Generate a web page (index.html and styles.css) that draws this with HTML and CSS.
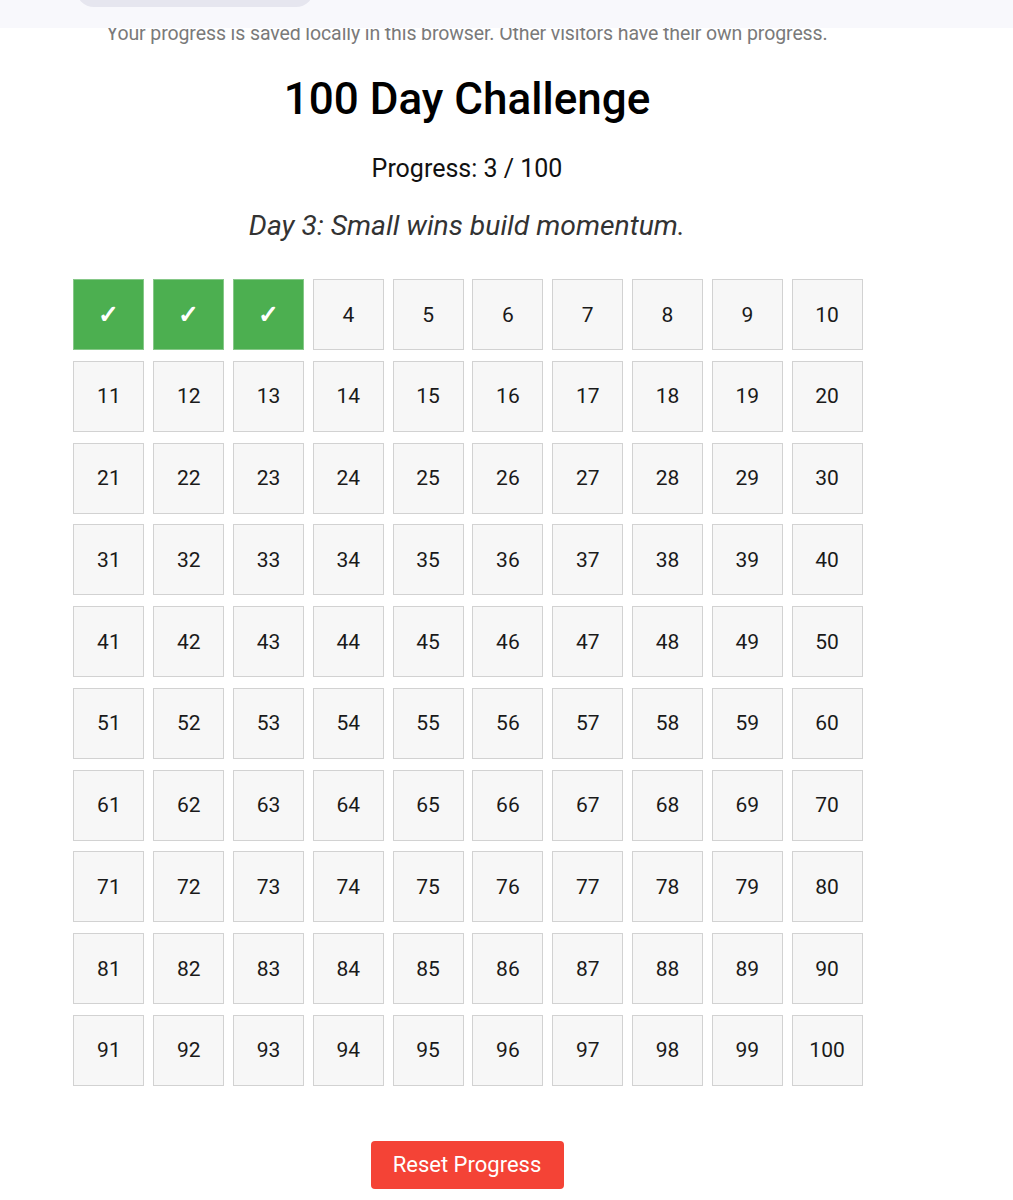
FILE: index.html
```html
<!DOCTYPE html>
<html lang="en">
<head>
<meta charset="utf-8">
<title>100 Day Challenge</title>
<link rel="stylesheet" href="styles.css">
</head>
<body>
<header class="topbar"><div class="pill"></div></header>
<main class="page">
  <p class="note">Your progress is saved locally in this browser. Other visitors have their own progress.</p>
  <h1 class="title">100 Day Challenge</h1>
  <p class="progress">Progress: 3 / 100</p>
  <p class="quote">Day 3: Small wins build momentum.</p>
  <div class="grid" id="grid"></div>
  <button class="reset">Reset Progress</button>
</main>
<script src="app.js"></script>
</body>
</html>
```
FILE: styles.css
```css
* { box-sizing: border-box; }
html, body { margin: 0; padding: 0; background: #fff; }
body { font-family: Roboto, "Noto Sans", Arial, sans-serif; color: #111; width: 1013px; }
.topbar {
  position: fixed; top: 0; left: 0; right: 0; height: 28px;
  background: #f8f8fc; z-index: 10;
}
.pill {
  position: absolute; left: 76px; top: -30px; width: 238px; height: 37px;
  border-radius: 0 0 18px 18px; background: #e6e6ef;
}
.page { width: 934px; display: flex; flex-direction: column; align-items: center; }
.note {
  margin: 22px 0 0; font-size: 19.5px; line-height: 24px; color: #7a7a7a;
  letter-spacing: -0.1px;
}
.title { margin: 27px 0 0; font-size: 44px; line-height: 52px; font-weight: 500; color: #000; }
.progress { margin: 28px 0 0; font-size: 25px; line-height: 32px; color: #111; }
.quote { margin: 25px 0 0; font-size: 28.3px; line-height: 32px; font-style: italic; color: #333; }
.grid {
  margin: 37px 0 0 2px;
  display: grid;
  grid-template-columns: repeat(10, 71px);
  grid-auto-rows: 71px;
  column-gap: 8.8px;
  row-gap: 10.75px;
}
.cell {
  border: 1px solid #d2d2d2; background: #f7f7f7;
  display: flex; align-items: center; justify-content: center;
  font-size: 21px; color: #1a1a1a;
}
.cell.done { background: #4caf50; border-color: #86c888; color: #fff; font-size: 25px; font-weight: 700; }
.reset {
  margin-top: 55px;
  width: 193px; height: 48px;
  background: #f44336; color: #fff; border: 0; border-radius: 4px;
  font-family: inherit; font-size: 22px; padding: 0;
}
```
FILE: app.js
```js
const grid = document.getElementById('grid');
for (let i = 1; i <= 100; i++) {
  const d = document.createElement('div');
  d.className = 'cell' + (i <= 3 ? ' done' : '');
  d.textContent = i <= 3 ? '\u2713' : String(i);
  grid.appendChild(d);
}
```
